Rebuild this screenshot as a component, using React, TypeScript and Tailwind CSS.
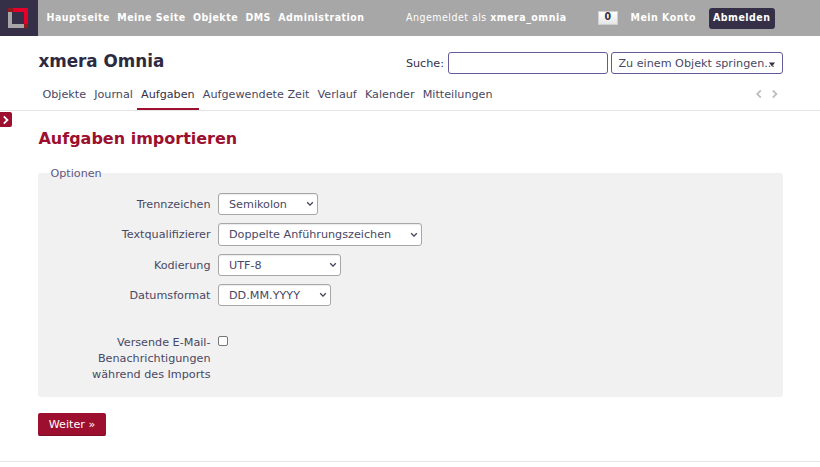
import React from "react";

const mainMenu = ["Hauptseite", "Meine Seite", "Objekte", "DMS", "Administration"];
const tabs = ["Objekte", "Journal", "Aufgaben", "Aufgewendete Zeit", "Verlauf", "Kalender", "Mitteilungen"];

function Logo() {
  return (
    <div className="flex h-9 w-[38px] shrink-0 items-center bg-[#353047] pl-2">
      <svg width="20" height="20" viewBox="0 0 20 20" shapeRendering="crispEdges">
        <path d="M0 4h4v12h12v4H0z" fill="#a7a7a7" />
        <path d="M4 0h16v16h-4V4H4z" fill="#e4002b" />
        <path d="M0 0h5v4H0zM16 16h4v4h-4z" fill="#911a1d" />
      </svg>
    </div>
  );
}

function TopBar() {
  return (
    <header className="flex h-9 bg-[#a7a7a7] font-['DejaVu_Sans_Condensed','DejaVu_Sans',sans-serif] text-[10.5px] leading-4 font-bold tracking-[0.5px] text-white [font-stretch:condensed]">
      <Logo />
      <nav className="flex gap-[7.3px] pt-[9px] pl-[8.5px] whitespace-nowrap">
        {mainMenu.map((item) => (
          <a key={item}>{item}</a>
        ))}
      </nav>
      <div className="ml-auto flex pr-[45px] whitespace-nowrap">
        <span className="w-[192px] pt-[9px] font-normal">
          Angemeldet als <b>xmera_omnia</b>
        </span>
        <span className="mt-[11px] h-[14px] w-5 border border-[#cfcfcf] bg-linear-to-b from-white to-[#e6e6e6] text-center leading-[9px] text-[#353047]">0</span>
        <a className="w-[91px] pt-[9px] pl-[12.5px]">Mein Konto</a>
        <a className="mt-2 h-[21px] w-[66px] rounded-[3px] bg-[#353047] pl-1 leading-[18px]">Abmelden</a>
      </div>
    </header>
  );
}

function Chevron({ left = false }: { left?: boolean }) {
  return (
    <svg width="6" height="8" viewBox="0 0 6 8" fill="none" stroke="#bdbdbd" strokeWidth="1.8">
      <path d={left ? "M4.8 .4 1.2 4l3.6 3.6" : "M.8 .4 4.4 4 .8 7.6"} />
    </svg>
  );
}

function SelectBox({ children, size }: { children: React.ReactNode; size: string }) {
  return (
    <div className={`flex items-center justify-between rounded-[3px] border border-[#a7a7a7] bg-white pr-[3px] pl-[10px] shadow-[inset_0_1px_1px_rgba(0,0,0,0.08)] ${size}`}>
      <span className="pt-px">{children}</span>
      <svg width="8" height="6" viewBox="0 0 8 6" fill="none" stroke="#42405a" strokeWidth="1.3">
        <path d="m1.2 1.2 2.8 2.9 2.8-2.9" />
      </svg>
    </div>
  );
}

function Field({ label, value, size, gap }: { label: string; value: string; size: string; gap: string }) {
  return (
    <div className={`flex items-center ${gap}`}>
      <label className="w-[180px] pt-px pr-[7.5px] text-right">{label}</label>
      <SelectBox size={size}>{value}</SelectBox>
    </div>
  );
}

export default function App() {
  return (
    <div className="h-[467px] w-[820px] overflow-hidden bg-white font-['DejaVu_Sans',Verdana,sans-serif] text-[11.2px] leading-4 text-[#484864]">
      <TopBar />
      <div className="flex h-[49px] items-start pt-4 pr-[37px] pl-[38.4px]">
        <h1 className="text-[16.8px] leading-[18px] font-bold whitespace-nowrap text-[#2d2a40]">xmera Omnia</h1>
        <div className="ml-auto flex items-center">
          <label className="mr-1 pt-px text-[#353047]">Suche:</label>
          <input className="mr-[3px] h-[22px] w-[160px] rounded-[3px] border border-[#625b99] bg-white outline-none" />
          <div className="flex h-[22px] w-[172px] items-center rounded-[3px] border border-[#625b99] bg-white pl-1.5 whitespace-nowrap">
            <span className="w-[155px] shrink-0 pt-px pl-[0.4px]">Zu einem Objekt springen...</span>
            <svg className="-ml-[4px] mt-[3px] shrink-0" width="6" height="5" viewBox="0 0 6 5">
              <path d="M0 .5h6L3 4.5z" fill="#353047" />
            </svg>
          </div>
        </div>
      </div>
      <div className="flex h-[26px] border-b border-[#e6e6e6] pr-[42px] pl-[38.4px]">
        <nav className="flex whitespace-nowrap">
          {tabs.map((tab) => (
            <a key={tab} className={`-mb-px h-[25px] px-[4.05px] pt-[2px] ${tab === "Aufgaben" ? "border-b-2 border-[#9c0f2e] text-[#353047]" : ""}`}>{tab}</a>
          ))}
        </nav>
        <div className="ml-auto flex gap-[10px] pt-[5px]">
          <Chevron left />
          <Chevron />
        </div>
      </div>
      <main className="flex">
        <button className="mt-px flex h-[15px] w-3 shrink-0 items-center justify-center rounded-r-[2px] bg-[#9c0f2e]">
          <svg width="6" height="8" viewBox="0 0 6 8" fill="none" stroke="white" strokeWidth="1.8">
            <path d="M.8 .4 4.4 4 .8 7.6" />
          </svg>
        </button>
        <div className="mr-[37px] ml-[26px] grow pt-[18px]">
          <h2 className="pl-[0.4px] text-[16px] leading-5 font-bold text-[#9c0f2e]">Aufgaben importieren</h2>
          <section className="mt-6 h-56 rounded-[3px] bg-[#f1f1f1]">
            <div className="-translate-y-[7px] pl-[12.4px] text-[#5d5780]">Optionen</div>
            <div className="pt-1">
              <Field label="Trennzeichen" value="Semikolon" size="h-[22px] w-[100px]" gap="mb-2" />
              <Field label="Textqualifizierer" value="Doppelte Anführungszeichen" size="h-[23px] w-[204px]" gap="mb-2" />
              <Field label="Kodierung" value="UTF-8" size="h-[22px] w-[123px]" gap="mb-2" />
              <Field label="Datumsformat" value="DD.MM.YYYY" size="h-[22px] w-[113px]" gap="mb-7" />
              <div className="flex items-start">
                <label className="w-[180px] pt-px pr-[7.5px] text-right">Versende E-Mail-<br />Benachrichtigungen<br />während des Imports</label>
                <span className="mt-0.5 h-2.5 w-2.5 rounded-[2px] border border-[#767676] bg-white" />
              </div>
            </div>
          </section>
          <button className="mt-4 h-[23px] w-[68px] rounded-[2px] border-b border-[#7d0c25] bg-[#9c0f2e] pt-px leading-[22px] text-white">Weiter »</button>
        </div>
      </main>
      <div className="mt-[25px] border-t border-[#e6e6e6]" />
    </div>
  );
}
